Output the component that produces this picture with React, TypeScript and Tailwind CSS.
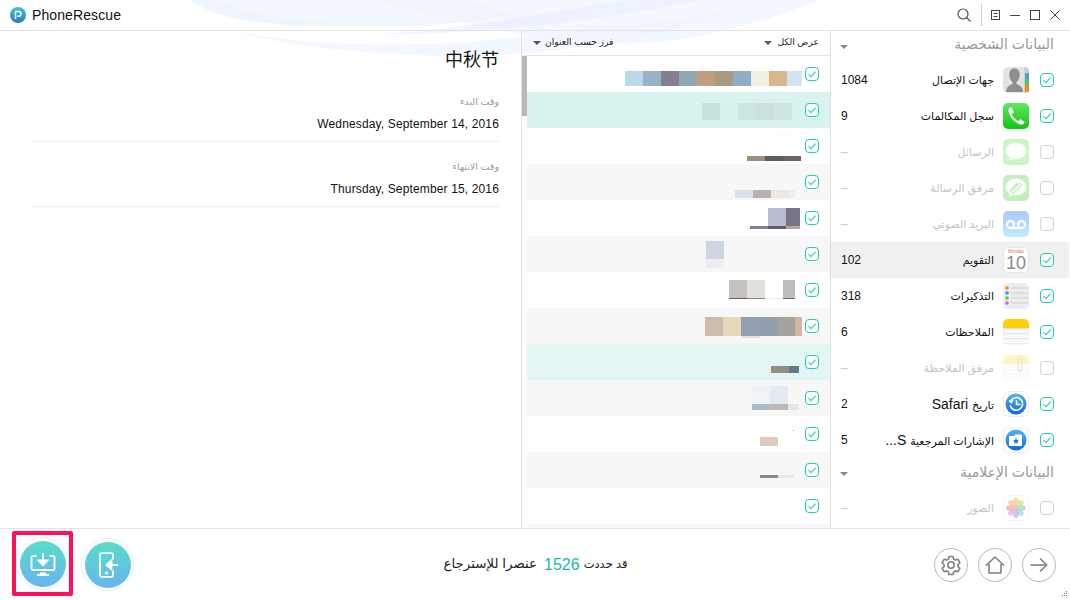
import React from 'react';

const FONT = "font-['Liberation_Sans','DejaVu_Sans','Noto_Sans_CJK_SC',sans-serif]";

type Block = [number, number, number, number, string];

// mosaic blocks per row: x, y, w, h, colour (row coordinates)
const cells = (x: number, y: number, h: number, colours: string[], w = 18): Block[] =>
  colours.map((c, i) => [x + i * w, y, w, h, c] as Block);

const listRows: { bg: string; blocks: Block[] }[] = [
  {
    bg: 'bg-white',
    blocks: [
      ...cells(98, 15, 15, ['#b9d9ea', '#9bb1c8', '#857e8f', '#8fa7b2', '#c39c7d', '#a69a80', '#8eadc7', '#f1f1e3', '#dcb589']),
      [260, 15, 15, 15, '#cfe5f2'],
    ],
  },
  {
    bg: 'bg-[#d9f3ef]',
    blocks: cells(175, 11, 17, ['#c8e2e2', '#d6f1ed', '#c9e5e4', '#cce2df', '#cde6e2']),
  },
  {
    bg: 'bg-white',
    blocks: [[251, 6, 18, 3, '#fffaf2'], ...cells(220, 28, 5, ['#a08d7a', '#5f5c5a', '#6b6361'])],
  },
  {
    bg: 'bg-[#f7f7f7]',
    blocks: [...cells(208, 26, 8, ['#d8e1e8', '#bcb0b4', '#f0e6e0']), [262, 26, 6, 8, '#eeeeee']],
  },
  {
    bg: 'bg-white',
    blocks: [
      [241, 8, 18, 18, '#b8bcd0'],
      [259, 8, 14, 18, '#787586'],
      [223, 26, 18, 3, '#8379a3'],
      [241, 26, 18, 3, '#5f5e60'],
      [259, 26, 14, 3, '#b8a49c'],
    ],
  },
  {
    bg: 'bg-[#f7f7f7]',
    blocks: [
      [179, 5, 18, 18, '#cdd6e0'],
      [179, 23, 18, 9, '#eeeeee'],
    ],
  },
  {
    bg: 'bg-white',
    blocks: [
      [202, 8, 18, 18, '#c5c2c0'],
      [220, 8, 18, 18, '#e1e0db'],
      [256, 8, 12, 18, '#bfbebe'],
      [202, 26, 18, 1, '#5f5c66'],
      [220, 26, 18, 1, '#8b8775'],
      [238, 26, 18, 1, '#e6eef5'],
      [256, 26, 12, 1, '#6f6d70'],
    ],
  },
  {
    bg: 'bg-[#f7f7f7]',
    blocks: [
      ...cells(178, 9, 19, ['#cdbbab', '#e6d7bd', '#92a0b2', '#929dad', '#a5a3a0']),
      [268, 9, 7, 19, '#d2b6a2'],
      [215, 28, 18, 2, '#e0e0e0'],
    ],
  },
  {
    bg: 'bg-[#e3f6f3]',
    blocks: [
      [244, 22, 18, 7, '#968d85'],
      [262, 22, 10, 7, '#61798a'],
    ],
  },
  {
    bg: 'bg-[#f7f7f7]',
    blocks: [
      [225, 6, 18, 18, '#eff3f6'],
      [243, 6, 18, 18, '#e1ebf1'],
      [225, 24, 18, 6, '#a9bcc9'],
      [243, 24, 18, 6, '#c0b8b6'],
      [261, 24, 11, 6, '#e6e6e6'],
    ],
  },
  {
    bg: 'bg-white',
    blocks: [
      [266, 14, 1, 1, '#7aa7d8'],
      [233, 21, 18, 9, '#e0ccbf'],
    ],
  },
  {
    bg: 'bg-[#f7f7f7]',
    blocks: [
      [233, 23, 18, 3, '#83908f'],
      [251, 23, 16, 3, '#efe5e8'],
    ],
  },
  { bg: 'bg-white', blocks: [] },
  { bg: 'bg-[#f7f7f7]', blocks: [] },
];

const Checkbox = ({ checked = true }: { checked?: boolean }) =>
  checked ? (
    <span className="flex h-[14px] w-[14px] shrink-0 items-center justify-center rounded-[4px] border border-[#1fcdb5] bg-white">
      <svg width="10" height="10" viewBox="0 0 10 10" fill="none" stroke="#2ccfb9" strokeWidth="1.1">
        <path d="M1.5 5.2 4 7.6 8.6 2.6" />
      </svg>
    </span>
  ) : (
    <span className="h-[14px] w-[14px] shrink-0 rounded-[4px] border border-[#cfcfcf] bg-white" />
  );

const Caret = ({ color = 'border-t-[#555555]' }: { color?: string }) => (
  <span className={`h-0 w-0 border-x-[4px] border-t-[4px] border-x-transparent ${color}`} />
);

const IconBox = ({ children }: { children: React.ReactNode }) => (
  <svg width="26" height="26" viewBox="0 0 26 26" className="shrink-0">
    {children}
  </svg>
);

const ContactsIcon = () => (
  <IconBox>
    <rect width="26" height="26" rx="5" fill="#e3e3e3" />
    <path d="M21 0h1a4 4 0 0 1 4 4v18a4 4 0 0 1-4 4h-1z" fill="#cfcfcf" />
    <rect x="22" y="6" width="4" height="6" fill="#4aa3e0" />
    <rect x="22" y="12" width="4" height="6" fill="#5fc060" />
    <rect x="22" y="18" width="4" height="7" rx="1" fill="#f08a20" />
    <path d="M3 25c0-5.500 3.500-6.500 6.500-8v-2c-2-1.200-3.200-4-3.200-7.500C6.300 3 9 1.500 11.500 1.500S16.700 3 16.700 7.500c0 3.500-1.200 6.300-3.200 7.500v2c3 1.500 6.500 2.500 6.500 8z" fill="#8e8e8e" />
  </IconBox>
);

const PhoneIcon = () => (
  <IconBox>
    <defs>
      <linearGradient id="ph" x1="0" y1="0" x2="0" y2="1">
        <stop offset="0" stopColor="#5fe85f" />
        <stop offset="1" stopColor="#12c412" />
      </linearGradient>
    </defs>
    <rect width="26" height="26" rx="5" fill="url(#ph)" />
    <path
      d="M7.500 4.500c-1 .5-2.300 1.800-2 3.500 .6 3.700 2.600 6.700 4.600 8.800 2.300 2.300 5 4.200 7.600 4.800 1.900.4 3.200-.9 3.700-2 .2-.5.100-.9-.4-1.200l-3-1.900c-.5-.3-.9-.2-1.300.2l-1 1.100c-.3.3-.6.3-1 .1-1.100-.7-2.100-1.600-3.100-2.600s-1.900-2.100-2.500-3.200c-.2-.4-.2-.7.100-1l1.100-1c.4-.4.500-.8.200-1.300L9 5c-.4-.6-.9-.8-1.500-.5z"
      fill="#fff"
    />
  </IconBox>
);

const MessageIcon = () => (
  <IconBox>
    <rect width="26" height="26" rx="5" fill="#b4f0ae" />
    <ellipse cx="13" cy="12" rx="10.500" ry="8.500" fill="#fff" />
    <path d="M7 17c0 2-1 3.500-2 4.500 2.500 0 4.500-1 6-2.500z" fill="#fff" />
  </IconBox>
);

const AttachIcon = () => (
  <IconBox>
    <rect width="26" height="26" rx="5" fill="#aee8a0" />
    <ellipse cx="13" cy="12" rx="10.500" ry="8.500" fill="#fff" />
    <path d="M7 17c0 2-1 3.500-2 4.500 2.500 0 4.500-1 6-2.500z" fill="#fff" />
    <path d="M9.500 15.500 15.500 9c1.500-1.500 3.500.5 2 2l-6 6.300c-2 2-5-1-3-3L14 8" fill="none" stroke="#aee8a0" strokeWidth="1.300" />
  </IconBox>
);

const VoicemailIcon = () => (
  <IconBox>
    <defs>
      <linearGradient id="vm" x1="0" y1="0" x2="0" y2="1">
        <stop offset="0" stopColor="#8fb2f5" />
        <stop offset="1" stopColor="#a6e8fc" />
      </linearGradient>
    </defs>
    <rect width="26" height="26" rx="5" fill="url(#vm)" />
    <circle cx="7.500" cy="13.500" r="3.500" fill="none" stroke="#fff" strokeWidth="2" />
    <circle cx="18.500" cy="13.500" r="3.500" fill="none" stroke="#fff" strokeWidth="2" />
    <path d="M7.500 17h11" stroke="#fff" strokeWidth="2" />
  </IconBox>
);

const CalendarIcon = () => (
  <svg width="26" height="26" viewBox="0 0 26 26" className="shrink-0">
    <rect x=".5" y=".5" width="25" height="25" rx="5" fill="#fff" stroke="#e6e6e6" />
    <text x="13" y="6" textAnchor="middle" fontSize="4.500" fill="#e86a6a">
      Monday
    </text>
    <text x="13" y="22" textAnchor="middle" fontSize="18" fill="#8a8a8a">
      10
    </text>
  </svg>
);

const RemindersIcon = () => (
  <IconBox>
    <rect width="26" height="26" rx="5" fill="#ececec" />
    {[5, 10, 15, 20].map((y) => (
      <rect key={y} x="8" y={y - 0.5} width="18" height="1" fill="#cfcfcf" />
    ))}
    <circle cx="4" cy="5" r="1.800" fill="#f28a1e" />
    <circle cx="4" cy="10" r="1.800" fill="#2b9bf0" />
    <circle cx="4" cy="15" r="1.800" fill="#5ccb3a" />
    <circle cx="4" cy="20" r="1.800" fill="#c56be0" />
  </IconBox>
);

const NotesIcon = () => (
  <IconBox>
    <path d="M5 0h16a5 5 0 0 1 5 5v4H0V5a5 5 0 0 1 5-5z" fill="#ffd008" />
    <rect y="9" width="26" height="17" fill="#f8f8f8" />
    <rect y="9" width="26" height="1" fill="#dcdcdc" />
    <rect y="14" width="26" height="1" fill="#e5e5e5" />
    <rect y="19" width="26" height="1" fill="#e5e5e5" />
    <rect y="24" width="26" height="1" fill="#ededed" />
  </IconBox>
);

const NoteAttachIcon = () => (
  <IconBox>
    <path d="M5 0h16a5 5 0 0 1 5 5v4H0V5a5 5 0 0 1 5-5z" fill="#fff0b0" />
    <rect y="9" width="26" height="17" fill="#fcfcfc" />
    <rect y="14" width="26" height="1" fill="#f2f2f2" />
    <rect y="19" width="26" height="1" fill="#f4f4f4" />
    <path d="M19 3v11c0 3-3.500 3-3.500 0V5c0-1 1-2 2-2" fill="none" stroke="#e5dcb8" strokeWidth="1.200" />
  </IconBox>
);

const BlueDisc = ({ children, id }: { children: React.ReactNode; id: string }) => (
  <svg width="26" height="26" viewBox="0 0 26 26" className="shrink-0">
    <defs>
      <linearGradient id={id} x1="0" y1="0" x2="0" y2="1">
        <stop offset="0" stopColor="#55b4f4" />
        <stop offset="1" stopColor="#1468d8" />
      </linearGradient>
    </defs>
    <rect x=".5" y=".5" width="25" height="25" rx="5" fill="#fff" stroke="#ececec" />
    <circle cx="13" cy="13" r="10.500" fill={`url(#${id})`} />
    {children}
  </svg>
);

const SafariHistoryIcon = () => (
  <BlueDisc id="sh">
    <path d="M7.200 14.500A6.300 6.300 0 1 0 8 9.500" fill="none" stroke="#fff" strokeWidth="1.500" />
    <path d="M5.500 9.500 8.500 13 10.500 9z" fill="#fff" />
    <path d="M13.500 9v4.500h4" fill="none" stroke="#fff" strokeWidth="1.500" />
  </BlueDisc>
);

const BookmarkIcon = () => (
  <BlueDisc id="bm">
    <path d="M6 10a1 1 0 0 1 1-1h4l1-1.500h6a1 1 0 0 1 1 1V18a1 1 0 0 1-1 1H7a1 1 0 0 1-1-1z" fill="#fff" />
    <path d="m13 11 .9 1.900 2.100.3-1.500 1.400.4 2.100-1.900-1-1.900 1 .4-2.100-1.500-1.400 2.100-.3z" fill="#1a70d8" />
  </BlueDisc>
);

const PhotosIcon = () => (
  <svg width="26" height="26" viewBox="0 0 26 26" className="shrink-0">
    <rect x=".5" y=".5" width="25" height="25" rx="5" fill="#fff" stroke="#f0f0f0" />
    {[
      ['#f6c65a', 0],
      ['#c6dc7e', 45],
      ['#8fd6a8', 90],
      ['#8fcbe0', 135],
      ['#a5a8e2', 180],
      ['#d0a6da', 225],
      ['#ef9a9a', 270],
      ['#f4b184', 315],
    ].map(([c, a]) => (
      <ellipse key={a as number} cx="13" cy="7.800" rx="3.100" ry="5" fill={c as string} opacity=".85" transform={`rotate(${a} 13 13)`} />
    ))}
  </svg>
);

const sidebarGroups: {
  title: string;
  items: { label: string; latin?: string; count: string; on: boolean; icon: React.ReactNode; active?: boolean }[];
}[] = [
  {
    title: 'البيانات الشخصية',
    items: [
      { label: 'جهات الإتصال', count: '1084', on: true, icon: <ContactsIcon /> },
      { label: 'سجل المكالمات', count: '9', on: true, icon: <PhoneIcon /> },
      { label: 'الرسائل', count: '–', on: false, icon: <MessageIcon /> },
      { label: 'مرفق الرسالة', count: '–', on: false, icon: <AttachIcon /> },
      { label: 'البريد الصوتي', count: '–', on: false, icon: <VoicemailIcon /> },
      { label: 'التقويم', count: '102', on: true, icon: <CalendarIcon />, active: true },
      { label: 'التذكيرات', count: '318', on: true, icon: <RemindersIcon /> },
      { label: 'الملاحظات', count: '6', on: true, icon: <NotesIcon /> },
      { label: 'مرفق الملاحظة', count: '–', on: false, icon: <NoteAttachIcon /> },
      { label: 'تاريخ', latin: 'Safari', count: '2', on: true, icon: <SafariHistoryIcon /> },
      { label: 'الإشارات المرجعية', latin: 'S...', count: '5', on: true, icon: <BookmarkIcon /> },
    ],
  },
  {
    title: 'البيانات الإعلامية',
    items: [{ label: 'الصور', count: '–', on: false, icon: <PhotosIcon /> }],
  },
];

const Waves = () => (
  <svg className="pointer-events-none absolute left-0 top-0" width="1070" height="60" viewBox="0 0 1070 60" fill="none">
    <path d="M190 0c40 28 110 26 190 26 90 0 150-14 220-26z" fill="#e9f1fe" opacity=".75" />
    <path d="M215 0c50 20 100 24 170 24 90 0 170-14 230-24z" fill="#f3f7ff" />
    <path d="M235 32c70 12 130 14 190 12 90-3 170-14 258-44h70c-60 32-190 56-290 56-90 0-170-10-228-24z" fill="#f1f6ff" opacity=".85" />
    <path d="M370 0c60 12 110 30 190 40 110 14 190-14 260-40z" fill="#eef4ff" opacity=".7" />
    <path d="M470 0c60 24 130 34 220 18 50-8 80-14 100-18z" fill="#f5f8ff" />
    <path d="M380 34c80-4 170-22 250-34h70C620 16 510 34 380 34z" fill="#e4ecfd" opacity=".5" />
  </svg>
);

const HeaderControls = () => (
  <div className="flex items-center">
    <svg width="14" height="14" viewBox="0 0 14 14" fill="none" stroke="#555555" strokeWidth="1.200">
      <circle cx="6" cy="6" r="5" />
      <path d="m9.500 9.500 4 4" />
    </svg>
    <span className="ml-[10px] h-[22px] w-px bg-[#d0d0d0]" />
    <svg className="ml-[9px]" width="9" height="10" viewBox="0 0 9 10" fill="none" stroke="#444444">
      <rect x=".5" y=".5" width="8" height="9" />
      <path d="M2.500 3.500h4M2.500 6.500h4" />
    </svg>
    <svg className="ml-[10px]" width="10" height="10" viewBox="0 0 10 10" stroke="#444444">
      <path d="M0 5.500h10" />
    </svg>
    <svg className="ml-[10px]" width="10" height="10" viewBox="0 0 10 10" fill="none" stroke="#444444">
      <rect x=".5" y=".5" width="9" height="9" />
    </svg>
    <svg className="ml-[10px]" width="10" height="10" viewBox="0 0 10 10" stroke="#444444">
      <path d="m.5.500 9 9M9.500.500l-9 9" />
    </svg>
  </div>
);

const ActionButton = ({ children, id }: { children: React.ReactNode; id: string }) => (
  <span className="flex h-[53px] w-[53px] items-center justify-center rounded-full border border-[#dff5f3] bg-white">
    <svg width="46" height="46" viewBox="0 0 46 46" fill="none" stroke="#fff" strokeWidth="1.800">
      <defs>
        <linearGradient id={id} x1="0" y1="0" x2="0" y2="1">
          <stop offset="0" stopColor="#5adcc8" />
          <stop offset="1" stopColor="#66b5f0" />
        </linearGradient>
      </defs>
      <circle cx="23" cy="23" r="23" fill={`url(#${id})`} stroke="none" />
      {children}
    </svg>
  </span>
);

const RoundButton = ({ children }: { children: React.ReactNode }) => (
  <span className="flex h-[34px] w-[34px] items-center justify-center rounded-full border-[1.5px] border-[#b8b8b8]">
    <svg width="24" height="24" viewBox="0 0 24 24" fill="none" stroke="#808080" strokeWidth="1.600" strokeLinejoin="round">
      {children}
    </svg>
  </span>
);

export default function App() {
  return (
    <div className={`relative flex h-[600px] w-[1070px] flex-col overflow-hidden bg-white ${FONT}`}>
      <Waves />

      <header className="relative flex h-[31px] shrink-0 items-center justify-between border-b border-[#e3e3e3] pl-[10px] pr-[10px]">
        <div className="flex items-center gap-[6px]">
          <svg width="16" height="16" viewBox="0 0 16 16">
            <defs>
              <linearGradient id="logo" x1="0" y1="0" x2="0" y2="1">
                <stop offset="0" stopColor="#3fc8c0" />
                <stop offset="1" stopColor="#2a78cc" />
              </linearGradient>
            </defs>
            <circle cx="8" cy="8" r="8" fill="url(#logo)" />
            <path d="M5.500 12V5.200c0-.5.400-.7.700-.7h2.300a2.400 2.400 0 0 1 0 4.800H7" fill="none" stroke="#fff" strokeWidth="1.500" />
          </svg>
          <span className="text-[14px] leading-none tracking-[0.1px] text-[#111111]">PhoneRescue</span>
        </div>
        <HeaderControls />
      </header>

      <main className="relative flex min-h-0 flex-1">
        <section className="flex w-[521px] shrink-0 flex-col pl-[32px] pr-[22px] text-right">
          <h1 className="pt-[18px] text-[18px] leading-[22px] text-[#111111]">中秋节</h1>
          <div className="h-[71px] border-b border-[#eeeeee]">
            <p className="pt-[24px] text-[9.5px] leading-[14px] text-[#999999]" dir="rtl">
              وقت البدء
            </p>
            <p className="pt-[7px] text-[12px] leading-[16px] tracking-[0.14px] text-[#111111]">Wednesday, September 14, 2016</p>
          </div>
          <div className="h-[65px] border-b border-[#eeeeee]">
            <p className="pt-[18px] text-[9.5px] leading-[14px] text-[#999999]" dir="rtl">
              وقت الانتهاء
            </p>
            <p className="pt-[7px] text-[12px] leading-[16px] tracking-[0.14px] text-[#111111]">Thursday, September 15, 2016</p>
          </div>
        </section>

        <section className="flex w-[309px] shrink-0 flex-col overflow-hidden border-l border-[#e0e0e0]">
          <div className="flex h-[25px] shrink-0 items-center justify-between border-b border-[#e5e5e5] pl-[11px] pr-[11px] text-[9.2px] text-[#222222]">
            <span className="flex items-center gap-[4px]">
              <Caret />
              <span dir="rtl">فرز حسب العنوان</span>
            </span>
            <span className="flex items-center gap-[5px]">
              <Caret />
              <span dir="rtl">عرض الكل</span>
            </span>
          </div>
          <div className="flex min-h-0 flex-1">
            <div className="w-[5px] shrink-0">
              <div className="h-[60px] bg-[#b9b9b9]" />
            </div>
            <div className="min-w-0 flex-1">
              {listRows.map((row, i) => (
                <div key={i} className={`flex h-9 items-center pr-[11px] ${row.bg}`}>
                  <svg width="278" height="36" className="shrink-0">
                    {row.blocks.map(([x, y, w, h, c], j) => (
                      <rect key={j} x={x} y={y} width={w} height={h} fill={c} />
                    ))}
                  </svg>
                  <Checkbox />
                </div>
              ))}
            </div>
          </div>
        </section>

        <aside className="mr-px min-w-0 flex-1 border-l border-[#e0e0e0]">
          {sidebarGroups.map((group, g) => (
            <div key={group.title}>
              <div className={`flex items-center justify-between pl-[9px] pr-[15px] ${g === 0 ? 'h-[31px]' : 'h-[32px]'}`}>
                <Caret color="border-t-[#888888]" />
                <span dir="rtl" className="mb-[4px] text-[14px] text-[#999999]">
                  {group.title}
                </span>
              </div>
              {group.items.map((item) => (
                <div
                  key={item.label}
                  className={`flex h-9 items-center pl-[10px] pr-[15px] ${item.active ? 'bg-[#f0f0f0]' : ''}`}
                >
                  <span className={`w-[42px] shrink-0 text-[12px] ${item.on ? 'text-[#111111]' : 'text-[#cccccc]'}`}>
                    {item.count}
                  </span>
                  <span
                    dir="rtl"
                    className={`mr-[9px] min-w-0 flex-1 whitespace-nowrap text-[11px] ${item.on ? 'text-[#111111]' : 'text-[#c4c4c4]'}`}
                  >
                    {item.label}
                    {item.latin && <span className="text-[14px]"> {item.latin}</span>}
                  </span>
                  <span className={`flex ${item.on ? '' : 'opacity-70'}`}>{item.icon}</span>
                  <span className="ml-[11px] flex">
                    <Checkbox checked={item.on} />
                  </span>
                </div>
              ))}
            </div>
          ))}
        </aside>
      </main>

      <footer className="relative flex h-[72px] shrink-0 items-center border-t border-[#e3e3e3] pr-[14px]">
        <div className="mb-[2px] ml-[12px] flex h-[65px] w-[61px] items-center justify-center rounded-[2px] border-[4px] border-[#ff1058]">
          <ActionButton id="a1">
            <path d="M16.500 15H13a1.500 1.500 0 0 0-1.500 1.500v11A1.500 1.500 0 0 0 13 29h20a1.500 1.500 0 0 0 1.500-1.500v-11A1.500 1.500 0 0 0 33 15h-3.500" />
            <path d="M23 12v10" />
            <path d="m18.500 19.500 4.500 5 4.500-5z" fill="#fff" />
            <path d="M20 32.500h6M17 34h12" />
          </ActionButton>
        </div>
        <div className="ml-[8px]">
          <ActionButton id="a2">
            <path d="M28 17.500V13a1.800 1.800 0 0 0-1.800-1.800h-9.400A1.800 1.800 0 0 0 15 13v20a1.800 1.800 0 0 0 1.800 1.800h9.400A1.800 1.800 0 0 0 28 33v-4.500" />
            <path d="M33 23h-9" />
            <path d="m26.500 18.500-5 4.500 5 4.500z" fill="#fff" />
            <circle cx="21.500" cy="31" r=".8" fill="#fff" />
          </ActionButton>
        </div>

        <p className="flex flex-1 items-center justify-center pl-[3px] text-[#222222]" dir="rtl">
          <span className="text-[11.500px]">قد حددت</span>
          <span className="ml-[7px] mr-[4px] text-[16px] text-[#20b8a8]">1526</span>
          <span className="text-[13.400px]">عنصرا للإسترجاع</span>
        </p>

        <div className="flex items-center gap-[10px]">
          <RoundButton>
            <path d="M10 3.500h4l.6 2.600 1.800 1 2.500-.8 2 3.400-2 1.800v2l2 1.800-2 3.400-2.500-.8-1.800 1-.6 2.600h-4l-.6-2.600-1.800-1-2.500.8-2-3.400 2-1.800v-2l-2-1.800 2-3.400 2.500.8 1.800-1z" />
            <circle cx="12" cy="12" r="3.200" />
          </RoundButton>
          <RoundButton>
            <path d="M3 12.500 12 4l9 8.500" />
            <path d="M6 11v9h12v-9" />
          </RoundButton>
          <RoundButton>
            <path d="M3.500 12h16" />
            <path d="m13 5.500 6.800 6.500-6.800 6.500" />
          </RoundButton>
        </div>

        <svg className="absolute bottom-[2px] right-[2px]" width="7" height="7" viewBox="0 0 7 7" fill="#777777">
          <rect x="5" y="0" width="1" height="1" />
          <rect x="3" y="2" width="1" height="1" />
          <rect x="5" y="2" width="1" height="1" />
          <rect x="1" y="4" width="1" height="1" />
          <rect x="3" y="4" width="1" height="1" />
          <rect x="5" y="4" width="1" height="1" />
        </svg>
      </footer>
    </div>
  );
}
